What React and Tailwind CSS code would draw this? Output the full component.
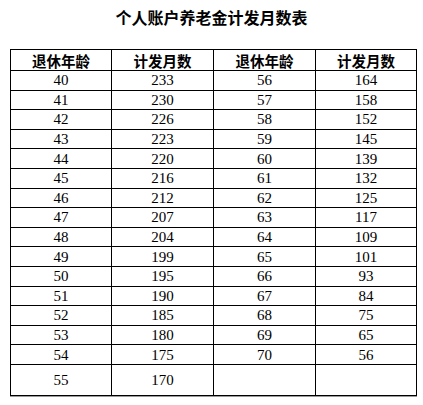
import React from 'react';

const rows = [
  ['40', '233', '56', '164'],
  ['41', '230', '57', '158'],
  ['42', '226', '58', '152'],
  ['43', '223', '59', '145'],
  ['44', '220', '60', '139'],
  ['45', '216', '61', '132'],
  ['46', '212', '62', '125'],
  ['47', '207', '63', '117'],
  ['48', '204', '64', '109'],
  ['49', '199', '65', '101'],
  ['50', '195', '66', '93'],
  ['51', '190', '67', '84'],
  ['52', '185', '68', '75'],
  ['53', '180', '69', '65'],
  ['54', '175', '70', '56'],
];

const cell = 'border border-black text-center p-0';

export default function App() {
  return (
    <div className="w-[423px] h-[405px] bg-white overflow-hidden">
      <h1 className="h-[35px] pt-[7px] text-center text-[16px] leading-[20px] font-bold text-black [font-family:'Noto_Sans_CJK_SC',sans-serif]">
        个人账户养老金计发月数表
      </h1>
      <div className="pl-[10px] pt-[14px]">
        <table className="border-collapse w-[406px] table-fixed shadow-[0_1px_0_#9a9a9a] [font-family:'Liberation_Serif','Noto_Sans_CJK_SC',serif] text-[15px] text-black">
          <colgroup>
            <col className="w-[101px]" />
            <col className="w-[102px]" />
            <col className="w-[102px]" />
            <col className="w-[101px]" />
          </colgroup>
          <thead>
            <tr className="h-[21px]">
              {['退休年龄', '计发月数', '退休年龄', '计发月数'].map((h, i) => (
                <th key={i} className={`${cell} font-bold text-[14.5px] leading-[19px] [font-family:'Noto_Sans_CJK_SC',sans-serif]`}>
                  {h}
                </th>
              ))}
            </tr>
          </thead>
          <tbody>
            {rows.map((r, i) => (
              <tr key={i} className="h-[19.6px]">
                {r.map((v, j) => (
                  <td key={j} className={`${cell} leading-[18px]`}>{v}</td>
                ))}
              </tr>
            ))}
            <tr className="h-[31px]">
              <td className={cell}>55</td>
              <td className={cell}>170</td>
              <td className={cell}></td>
              <td className={cell}></td>
            </tr>
          </tbody>
        </table>
      </div>
    </div>
  );
}
